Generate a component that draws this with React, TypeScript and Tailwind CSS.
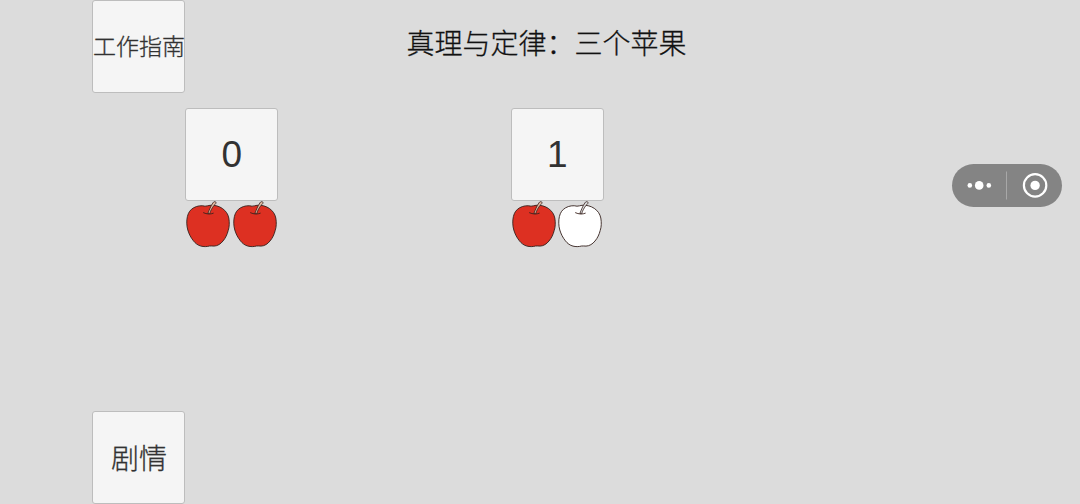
import clsx from 'clsx';

interface AppleProps {
  filled: boolean;
}

interface Slot {
  id: number;
  apples: boolean[];
}

const slots: Slot[] = [
  { id: 0, apples: [true, true] },
  { id: 1, apples: [true, false] },
];

function Apple({ filled }: AppleProps) {
  return (
    <svg viewBox="0 0 46.5 46.5" className="w-[46.5px] h-[46.5px] shrink-0">
      {/* Body */}
      <path
        d="M20 5.2C22 5.2 23 4.5 25 4.3C30 3.9 34 5.2 37.3 7.4C40.8 9.8 43 13 43.8 17C44.6 21.5 44.4 26 43.2 29.5C42.2 33.4 40.6 37 38 40C35.6 43 32.5 45 29 45.1C27.5 45.2 26 44.7 24.5 45C22 45.8 18.5 45.8 16 45.1C13 44.4 10.4 42.4 8.4 39.8C5.8 36.6 4 33 2.8 29C1.6 25 1.4 19.5 2.4 15.5C3.3 11.5 5.4 8.6 8.6 6.8C12 4.8 16.5 4.2 20 5.2Z"
        fill={filled ? '#dd3022' : '#ffffff'}
        stroke="#33201c"
        strokeWidth="0.9"
      />
      {/* Dimple */}
      <path
        d="M18.2 11.6C20 12.4 21.8 12.9 23.7 13C25.6 13 27.2 12.7 28.6 12.1"
        fill="none"
        stroke="#3a211c"
        strokeWidth="0.9"
      />
      {/* Stem */}
      <path
        d="M22.9 12.4C24.2 9.2 25.6 5.2 28 1.8C28.6 0.4 30.9 0.2 31 1.6C31.1 2.6 30 3.4 29.2 4.2C27.2 6.8 25.6 9.4 24.7 12.6Z"
        fill={filled ? '#e3b9a0' : '#dddddd'}
        stroke="#33201c"
        strokeWidth="0.8"
      />
    </svg>
  );
}

function Tile({ label, className }: { label: string; className?: string }) {
  return (
    <button
      className={clsx(
        'flex w-[93px] h-[93px] shrink-0 items-center justify-center whitespace-nowrap rounded-[3px] border border-[#bdbdbd] bg-[#f5f5f5] text-[#323232]',
        className
      )}
    >
      {label}
    </button>
  );
}

function Capsule() {
  return (
    <div className="flex w-[110px] h-[43px] items-center rounded-full bg-[#848484]">
      <svg viewBox="0 0 110 43" className="w-full h-full">
        <g fill="#ffffff">
          <circle cx="17.8" cy="21.4" r="2.3" />
          <circle cx="27.2" cy="21.4" r="4.3" />
          <circle cx="36.8" cy="21.4" r="2.3" />
          <circle cx="83.1" cy="21.4" r="4.7" />
        </g>
        <path d="M54.5 7.5V35.5" stroke="#a8a8a8" strokeWidth="1" />
        <circle cx="83.1" cy="21.4" r="11.2" fill="none" stroke="#ffffff" strokeWidth="2.2" />
      </svg>
    </div>
  );
}

export default function App() {
  return (
    <div className="relative flex h-[504px] w-[1080px] flex-col overflow-hidden bg-[#dcdcdc] pl-[92.4px] font-['Noto_Sans_CJK_SC',sans-serif] font-light">
      {/* Header */}
      <header className="flex h-[108px] items-start">
        <Tile label="工作指南" className="pb-[2px] text-[23px] [-webkit-text-stroke:0.3px]" />
        <h1 className="ml-[221px] mt-[21px] whitespace-nowrap text-[28px] leading-[42px] text-[#111111] [-webkit-text-stroke:0.3px]">
          真理与定律：三个苹果
        </h1>
      </header>

      {/* Slots */}
      <main className="flex flex-1 gap-[232.5px] pl-[93px]">
        {slots.map(slot => (
          <section key={slot.id} className="w-[93px]">
            <Tile
              label={String(slot.id)}
              className="font-['Liberation_Sans',sans-serif] text-[37px] font-normal"
            />
            <div className="flex">
              {slot.apples.map((filled, i) => (
                <Apple key={i} filled={filled} />
              ))}
            </div>
          </section>
        ))}
      </main>

      <footer className="flex">
        <Tile label="剧情" className="pb-[2px] text-[28px] [-webkit-text-stroke:0.3px]" />
      </footer>

      {/* Floating menu capsule */}
      <div className="absolute left-[952px] top-[164px]">
        <Capsule />
      </div>
    </div>
  );
}
